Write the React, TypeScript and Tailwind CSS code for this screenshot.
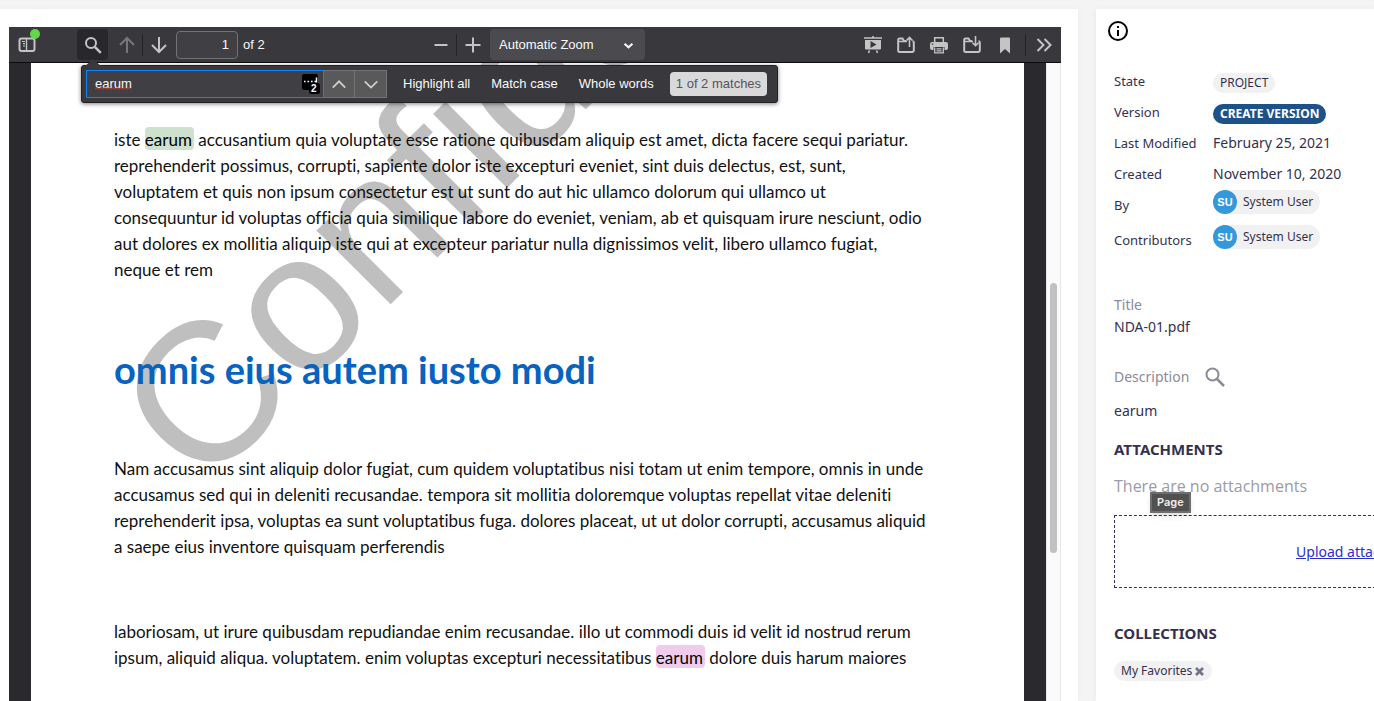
import React from "react";

type Children = { children: React.ReactNode };

const firstParagraph: React.ReactNode[] = [
  <>
    iste <Match tone="green">earum</Match> accusantium quia voluptate esse ratione quibusdam aliquip est amet, dicta facere sequi pariatur.
  </>,
  "reprehenderit possimus, corrupti, sapiente dolor iste excepturi eveniet, sint duis delectus, est, sunt,",
  "voluptatem et quis non ipsum consectetur est ut sunt do aut hic ullamco dolorum qui ullamco ut",
  "consequuntur id voluptas officia quia similique labore do eveniet, veniam, ab et quisquam irure nesciunt, odio",
  "aut dolores ex mollitia aliquip iste qui at excepteur pariatur nulla dignissimos velit, libero ullamco fugiat,",
  "neque et rem",
];

const secondParagraph: React.ReactNode[] = [
  "Nam accusamus sint aliquip dolor fugiat, cum quidem voluptatibus nisi totam ut enim tempore, omnis in unde",
  "accusamus sed qui in deleniti recusandae. tempora sit mollitia doloremque voluptas repellat vitae deleniti",
  "reprehenderit ipsa, voluptas ea sunt voluptatibus fuga. dolores placeat, ut ut dolor corrupti, accusamus aliquid",
  "a saepe eius inventore quisquam perferendis",
];

const thirdParagraph: React.ReactNode[] = [
  "laboriosam, ut irure quibusdam repudiandae enim recusandae. illo ut commodi duis id velit id nostrud rerum",
  <>
    ipsum, aliquid aliqua. voluptatem. enim voluptas excepturi necessitatibus <Match tone="pink">earum</Match> dolore duis harum maiores
  </>,
];

function Match({ tone, children }: Children & { tone: "green" | "pink" }) {
  return (
    <mark className={`rounded pt-[2px] pr-[2px] text-black ${tone === "green" ? "bg-[#cde1cc]" : "bg-[#efcbed]"}`}>{children}</mark>
  );
}

function Paragraph({ lines }: { lines: React.ReactNode[] }) {
  return (
    <p className="whitespace-nowrap text-[17px] leading-[26px]">
      {lines.map((line, i) => (
        <span key={i} className="block">
          {line}
        </span>
      ))}
    </p>
  );
}

function Icon({ children, className = "size-[18px]" }: Children & { className?: string }) {
  return (
    <svg viewBox="0 0 18 18" className={`shrink-0 ${className}`} fill="none" stroke="currentColor" strokeWidth="2" aria-hidden="true">
      {children}
    </svg>
  );
}

function ToolButton({ label, className = "", children }: Children & { label: string; className?: string }) {
  return (
    <button type="button" aria-label={label} className={`flex h-[31px] w-[31px] shrink-0 items-center justify-center rounded-sm ${className}`}>
      {children}
    </button>
  );
}

function Separator() {
  return <span className="h-[22px] w-px shrink-0 bg-[#242428]" />;
}

function Toolbar() {
  return (
    <div className="flex h-9 shrink-0 items-center border-b border-[#0c0c0d] bg-[#38383d] font-['Liberation_Sans',sans-serif] text-[13px] text-[#c4c4c5]">
      <div className="flex min-w-0 flex-1 items-center pl-[2px]">
        <ToolButton label="Toggle Sidebar" className="relative mr-[35px]">
          <Icon>
            <rect x="1.5" y="2.5" width="15" height="12.5" rx="2" />
            <path d="M8.5 3v12" strokeWidth="1.4" />
            <path d="M4 5.5h3M5 7.7h2M5 10h2" strokeWidth="1.2" />
          </Icon>
          <span className="absolute top-0 right-[2px] size-[10px] rounded-full bg-[#62d74d]" />
        </ToolButton>
        <ToolButton label="Find in Document" className="bg-[#28282c]">
          <Icon>
            <circle cx="7" cy="7" r="5" />
            <path d="M10.8 10.8l6 6" strokeWidth="2.6" />
          </Icon>
        </ToolButton>
        <ToolButton label="Previous Page" className="ml-[3px] text-[#77777a]">
          <Icon>
            <path d="M9 17V2M2 9l7-7 7 7" />
          </Icon>
        </ToolButton>
        <Separator />
        <ToolButton label="Next Page">
          <Icon>
            <path d="M9 1v15M2 9l7 7 7-7" />
          </Icon>
        </ToolButton>
        <input aria-label="Page" defaultValue="1" className="ml-[2px] h-[28px] w-[62px] rounded-sm border border-[#737376] bg-[#404044] pr-2 text-right text-[13px] text-[#f9f9fa]" />
        <span className="ml-[5px] text-[#f9f9fa]">of 2</span>
      </div>
      <div className="flex items-center">
        <ToolButton label="Zoom Out">
          <Icon>
            <path d="M2.5 9h13" />
          </Icon>
        </ToolButton>
        <Separator />
        <ToolButton label="Zoom In">
          <Icon>
            <path d="M1.5 9h15M9 1.5v15" />
          </Icon>
        </ToolButton>
        <div className="relative ml-[2px] text-[#f9f9fa]">
          <select aria-label="Zoom" className="h-[31px] w-[155px] appearance-none rounded-sm bg-[#4a4a4f] pl-[9px] text-[13px]">
            <option>Automatic Zoom</option>
          </select>
          <Icon className="pointer-events-none absolute top-[11px] right-[11px] size-[11px]">
            <path d="M2.5 6l6.5 6L15.5 6" strokeWidth="3.2" />
          </Icon>
        </div>
      </div>
      <div className="flex min-w-0 flex-1 items-center justify-end gap-[2px] pr-[2px]">
        <ToolButton label="Presentation Mode">
          <Icon>
            <path d="M0 2h18M9 0v2" strokeWidth="1.6" />
            <path fill="currentColor" stroke="none" fillRule="evenodd" d="M1 4h16v8.500a1 1 0 0 1-1 1H2a1 1 0 0 1-1-1zM6.500 5v7l6-3.500z" />
            <path d="M5.500 14.500l-1 2.500M12.500 14.500l1 2.500" strokeWidth="1.6" />
          </Icon>
        </ToolButton>
        <ToolButton label="Open File">
          <Icon>
            <path d="M9 5H7L5.500 2.500H2.500A1.300 1.300 0 0 0 1.200 4v10.500a1.500 1.500 0 0 0 1.500 1.500h12.600a1.500 1.500 0 0 0 1.500-1.500V6.500a1.300 1.300 0 0 0-1.300-1.300" />
            <path d="M1 5.500h9" strokeWidth="1.500" />
            <path d="M12.500 11V1.500M9.500 4.500l3-3 3 3" strokeWidth="1.600" />
          </Icon>
        </ToolButton>
        <ToolButton label="Print">
          <Icon>
            <path d="M4.700 6V1.700h8.600V6" strokeWidth="1.5" />
            <path fill="currentColor" stroke="none" fillRule="evenodd" d="M2 6h14a2 2 0 0 1 2 2v4a2 2 0 0 1-2 2h-1.500v-3h-11v3H2a2 2 0 0 1-2-2V8a2 2 0 0 1 2-2zM1.800 7.500v1.300h1.400V7.500z" />
            <path d="M4.700 11.500v5.300h8.600v-5.300M6.500 12.800h5M6.500 14.900h5" strokeWidth="1.300" />
          </Icon>
        </ToolButton>
        <ToolButton label="Save">
          <Icon>
            <path d="M9 5H7L5.500 2.500H2.500A1.300 1.300 0 0 0 1.200 4v10.500a1.500 1.500 0 0 0 1.500 1.500h12.600a1.500 1.500 0 0 0 1.500-1.500V6.500a1.300 1.300 0 0 0-1.300-1.300" />
            <path d="M1 5.500h9" strokeWidth="1.500" />
            <path d="M12.500 0v9.500M9.500 6.700l3 3 3-3" strokeWidth="1.600" />
          </Icon>
        </ToolButton>
        <ToolButton label="Current View">
          <Icon>
            <path fill="currentColor" stroke="none" d="M5 1.500h8a1 1 0 0 1 1 1V17.500l-5-4.500-5 4.500V2.500a1 1 0 0 1 1-1z" />
          </Icon>
        </ToolButton>
        <span className="w-px" />
        <Separator />
        <ToolButton label="Tools">
          <Icon>
            <path d="M2.500 3l6 6-6 6M9.500 3l6 6-6 6" />
          </Icon>
        </ToolButton>
      </div>
    </div>
  );
}

function FindToggle({ children }: Children) {
  return (
    <label className="whitespace-nowrap">
      <input type="checkbox" className="sr-only" />
      {children}
    </label>
  );
}

function FindBar() {
  return (
    <div className="absolute top-[38px] left-[72px] z-10 flex h-[38px] items-center rounded-[3px] border border-[#222226] bg-[#38383d] pr-[10px] pl-[4px] font-['Liberation_Sans',sans-serif] text-[13px] text-[#f9f9fa] shadow-[0_1px_4px_rgba(0,0,0,0.5)]">
      <svg viewBox="0 0 18 8" className="absolute -top-[7px] left-[2px] h-2 w-[18px]" aria-hidden="true">
        <path d="M0 8L9 0l9 8z" fill="#38383d" />
      </svg>
      <div className="relative">
        <input
          aria-label="Find in document"
          defaultValue="earum"
          spellCheck={false}
          className="block h-[28px] w-[238px] border border-[#0a84ff] bg-[#404044] pb-[2px] pl-2 text-[13px] outline-none"
        />
        <svg viewBox="0 0 38 3" className="pointer-events-none absolute top-[17px] left-[9px] h-[3px] w-[38px]" fill="none" stroke="#e03a2e" aria-hidden="true">
          <path d="M0 2.500l2-2 2 2 2-2 2 2 2-2 2 2 2-2 2 2 2-2 2 2 2-2 2 2 2-2 2 2 2-2 2 2 2-2 2 2" />
        </svg>
        <svg viewBox="0 0 18 20" className="absolute top-1 right-1 h-5 w-[18px]" aria-hidden="true">
          <rect width="16" height="16" rx="2" fill="#000" />
          <rect x="7" y="9" width="11" height="11" rx="2.500" fill="#000" />
          <path d="M2 7.500h1.600M5.500 7.500h1.600M9 7.500h1.600M12.500 7.500h2M14.500 3.500v5" stroke="#fff" strokeWidth="1.500" />
          <text x="9" y="18" fontSize="10" fontWeight="700" fill="#fff">2</text>
        </svg>
      </div>
      <button type="button" aria-label="Previous match" className="flex h-[28px] w-[31px] items-center justify-center border-y border-r border-[#737376] bg-[#59595a] text-[#d0d0d0]">
        <Icon className="size-4">
          <path d="M2 13l7-7 7 7" />
        </Icon>
      </button>
      <button type="button" aria-label="Next match" className="flex h-[28px] w-8 items-center justify-center border-y border-r border-[#737376] bg-[#59595a] text-[#d0d0d0]">
        <Icon className="size-4">
          <path d="M2 6l7 7 7-7" />
        </Icon>
      </button>
      <div className="mr-4 ml-4 flex gap-[21px]">
        <FindToggle>Highlight all</FindToggle>
        <FindToggle>Match case</FindToggle>
        <FindToggle>Whole words</FindToggle>
      </div>
      <output className="rounded-sm bg-[#d9d9d9] px-[6px] text-[13px] leading-6 whitespace-nowrap text-[#55555a]">1 of 2 matches</output>
    </div>
  );
}

function DocumentPage() {
  return (
    <article className="relative min-w-0 flex-1 overflow-hidden bg-white px-[83px] pt-16 font-['Lato',sans-serif] text-[#111] [font-variant-ligatures:none]">
      <svg className="pointer-events-none absolute top-0 left-0 h-full w-full" aria-hidden="true">
        <text x="171" y="430" transform="rotate(-45 171 430)" fontSize="198" fill="#bfbfbf" className="font-['Liberation_Sans',sans-serif]">
          Confidential
        </text>
      </svg>
      <div className="relative">
        <Paragraph lines={firstParagraph} />
        <h1 className="mt-[62px] mb-[63px] text-[38px] leading-[48px] font-bold whitespace-nowrap text-[#0563c1]">omnis eius autem iusto modi</h1>
        <Paragraph lines={secondParagraph} />
        <div className="h-[59px]" />
        <Paragraph lines={thirdParagraph} />
      </div>
    </article>
  );
}

function Row({ label, className = "h-[31px]", labelClass = "", children }: Children & { label: string; className?: string; labelClass?: string }) {
  return (
    <div className={`flex items-start ${className}`}>
      <dt className={`w-[99px] shrink-0 text-[13px] leading-5 ${labelClass}`}>{label}</dt>
      <dd className="flex text-[14px] leading-5 whitespace-nowrap">{children}</dd>
    </div>
  );
}

function UserChip() {
  return (
    <span className="flex h-6 items-center rounded-full bg-[#f1f1f1] pr-[7px] text-[12px]">
      <span className="mr-[6px] flex size-6 items-center justify-center rounded-full bg-[#3598db] font-['Liberation_Sans',sans-serif] text-[11px] font-bold text-white">SU</span>
      System User
    </span>
  );
}

function Details() {
  return (
    <aside className="relative w-[278px] shrink-0 overflow-hidden bg-white pl-[18px] font-['Noto_Sans','Open_Sans',sans-serif] text-[#33314f] shadow-[0_0_6px_rgba(0,0,0,0.05)]">
      <button type="button" aria-label="Information" className="mt-[11px] -ml-[7px] block text-black">
        <svg viewBox="0 0 22 22" className="size-[22px]" aria-hidden="true">
          <circle cx="11" cy="11" r="9" fill="none" stroke="currentColor" strokeWidth="2" />
          <path d="M10 10h2v6h-2zM10 6h2v2h-2z" fill="currentColor" />
        </svg>
      </button>
      <dl className="mt-[29px]">
        <Row label="State">
          <span className="mt-[2px] rounded-full bg-[#f1f1f1] px-[7px] text-[12px]">PROJECT</span>
        </Row>
        <Row label="Version">
          <button type="button" className="mt-[2px] rounded-full bg-[#1d5288] px-[7px] text-[12px] leading-5 font-bold text-white">CREATE VERSION</button>
        </Row>
        <Row label="Last Modified">February 25, 2021</Row>
        <Row label="Created" className="h-[26px]">November 10, 2020</Row>
        <Row label="By" className="h-[35px]" labelClass="pt-[5px]">
          <UserChip />
        </Row>
        <Row label="Contributors" className="h-[35px]" labelClass="pt-[5px]">
          <UserChip />
        </Row>
        <div className="mt-[34px] text-[14px] leading-[22px]">
          <dt className="text-[#8b8a99]">Title</dt>
          <dd>NDA-01.pdf</dd>
        </div>
        <div className="mt-[27px] text-[14px] leading-[22px]">
          <dt className="flex h-6 items-center gap-4 text-[#8b8a99]">
            Description
            <svg viewBox="0 0 20 20" className="size-5" fill="none" stroke="currentColor" aria-hidden="true">
              <circle cx="7.500" cy="7.500" r="6" strokeWidth="2" />
              <path d="M12 12l7 7" strokeWidth="2.500" />
            </svg>
          </dt>
          <dd className="mt-[11px]">earum</dd>
        </div>
      </dl>
      <section>
        <h2 className="mt-4 text-[15px] leading-[22px] font-bold">ATTACHMENTS</h2>
        <p className="mt-[15px] font-['Open_Sans',sans-serif] text-[16px] leading-[22px] whitespace-nowrap text-[#9b9aa8]">There are no attachments</p>
        <div className="mt-[18px] flex h-[73px] w-[491px] items-center justify-center border border-dashed border-[#33314f] text-[14px]">
          <a href="#upload" className="text-[#2a2fc9] underline">Upload attachment</a>
        </div>
      </section>
      <section>
        <h2 className="mt-[34px] text-[15px] leading-[22px] font-bold">COLLECTIONS</h2>
        <div className="mt-[17px] flex">
          <span className="flex items-center gap-[3px] rounded-full bg-[#f1f1f1] pr-2 pl-[7px] text-[12px] leading-5">
            My Favorites
            <button type="button" aria-label="Remove from My Favorites" className="text-[#74738a]">
              <svg viewBox="0 0 9 9" className="size-[9px]" aria-hidden="true">
                <path d="M1 1l7 7M8 1L1 8" stroke="currentColor" strokeWidth="2.800" />
              </svg>
            </button>
          </span>
        </div>
      </section>
      <div role="tooltip" className="absolute top-[483px] left-[54px] border-2 border-[#6e6e6e] bg-[#515151] px-[5px] font-['Inter',sans-serif] text-[11px] leading-[17px] font-semibold text-[#eee] shadow-md">
        Page
      </div>
    </aside>
  );
}

export default function App() {
  return (
    <div className="flex h-screen gap-[18px] overflow-hidden bg-[#f4f4f4] pt-[9px]">
      <main className="flex min-w-0 flex-1 bg-white pt-[18px] pr-[17px] pl-[9px] shadow-[0_0_6px_rgba(0,0,0,0.04)]">
        <div className="relative flex min-w-0 flex-1 flex-col">
          <Toolbar />
          <FindBar />
          <div className="flex min-h-0 flex-1 bg-[#2a2a2e] pl-[22px]">
            <DocumentPage />
            <div className="ml-[22px] w-[15px] shrink-0 border-x border-[#e8e8e8] bg-[#fafafa] px-[3px] pt-[220px]">
              <div className="h-[270px] rounded-full bg-[#c1c1c1]" />
            </div>
          </div>
        </div>
      </main>
      <Details />
    </div>
  );
}
